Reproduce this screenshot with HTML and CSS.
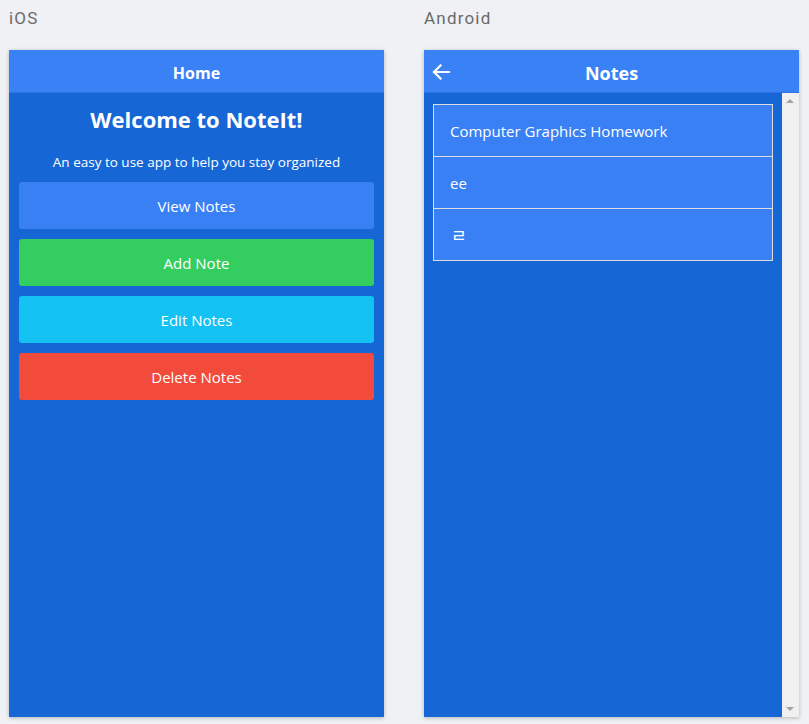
FILE: index.html
```html
<!DOCTYPE html>
<html>
<head>
<meta charset="utf-8">
<link rel="stylesheet" href="styles.css">
</head>
<body>
<div class="stage">
  <section class="col">
    <div class="label">iOS</div>
    <div class="phone">
      <div class="bar"><span class="bar-title">Home</span></div>
      <div class="home">
        <h1 class="welcome">Welcome to NoteIt!</h1>
        <p class="sub">An easy to use app to help you stay organized</p>
        <div class="btn btn-view">View Notes</div>
        <div class="btn btn-add">Add Note</div>
        <div class="btn btn-edit">Edit Notes</div>
        <div class="btn btn-del">Delete Notes</div>
      </div>
    </div>
  </section>
  <section class="col col-android">
    <div class="label">Android</div>
    <div class="phone">
      <div class="bar bar-android">
        <svg class="back" width="18" height="16" viewBox="0 0 18 16"><path d="M17 8H2M8.5 1.5L2 8l6.5 6.5" fill="none" stroke="#fff" stroke-width="2.2" stroke-linecap="square"/></svg>
        <span class="bar-title bar-title-lg">Notes</span>
      </div>
      <div class="notes-body">
        <div class="notes-scroll">
          <ul class="list">
            <li class="item">Computer Graphics Homework</li>
            <li class="item">ee</li>
            <li class="item item-kr">ㄹ</li>
          </ul>
        </div>
        <div class="scrollbar">
          <span class="arrow arrow-up"></span>
          <span class="arrow arrow-down"></span>
        </div>
      </div>
    </div>
  </section>
</div>
</body>
</html>
```
FILE: styles.css
```css
* { box-sizing: border-box; }
html, body { margin: 0; padding: 0; }
body {
  background: #f0f1f4;
  font-family: "Open Sans", "Noto Sans", sans-serif;
  width: 809px;
  height: 724px;
  overflow: hidden;
}
.stage {
  display: flex;
  gap: 40px;
  padding-left: 9px;
}
.col { width: 375px; display: flex; flex-direction: column; }
.col-android { width: 375px; }
.label {
  font-family: Roboto, "Liberation Sans", sans-serif;
  color: #6b6b6b;
  font-size: 17px;
  letter-spacing: 1.2px;
  height: 50px;
  padding-top: 8px;
  line-height: 20px;
}
.phone {
  height: 667px;
  background: #1766d6;
  box-shadow: 0 1px 4px rgba(0,0,0,0.25);
  display: flex;
  flex-direction: column;
}
.bar {
  height: 43px;
  flex: none;
  background: #3a81f5;
  border-bottom: 1px solid #2a72e6;
  display: flex;
  align-items: center;
  justify-content: center;
  position: relative;
  padding-top: 3px;
}
.bar-title {
  color: #fff;
  font-weight: 700;
  font-size: 16px;
}
.bar-title-lg { font-size: 18px; }
.back { position: absolute; left: 8px; top: 14px; }
.home {
  padding: 0 10px;
  display: flex;
  flex-direction: column;
}
.welcome {
  margin: 10px 0 0;
  text-align: center;
  color: #fff;
  font-size: 22px;
  font-weight: 700;
  line-height: 32px;
}
.sub {
  margin: 19px 0 0;
  text-align: center;
  color: #fff;
  font-size: 13.5px;
  line-height: 16px;
}
.btn {
  height: 47px;
  margin-top: 10px;
  border-radius: 3px;
  color: #fff;
  font-size: 15px;
  display: flex;
  align-items: center;
  justify-content: center;
}
.sub + .btn { margin-top: 12px; }
.btn-view { background: #3a80f5; }
.btn-add { background: #34cd60; }
.btn-edit { background: #13c2f3; }
.btn-del { background: #f24a3b; }
.notes-body {
  flex: 1;
  display: flex;
}
.notes-scroll {
  flex: 1;
  padding: 11px 9px 0;
}
.list {
  list-style: none;
  margin: 0;
  padding: 0;
  border: 1px solid #dcdcdc;
  border-bottom: none;
}
.item {
  height: 52px;
  background: #3a80f5;
  border-bottom: 1px solid #dcdcdc;
  color: #fff;
  font-size: 15px;
  display: flex;
  align-items: center;
  padding-left: 16px;
}
.item-kr {
  font-family: "Noto Sans CJK KR", "Open Sans", sans-serif;
  font-size: 17px;
  padding-left: 17px;
}
.scrollbar {
  width: 17px;
  background: #f0f0f0;
  position: relative;
}
.arrow {
  position: absolute;
  left: 4px;
  width: 0; height: 0;
  border-left: 4px solid transparent;
  border-right: 4px solid transparent;
}
.arrow-up { top: 6px; border-bottom: 4px solid #a3a3a3; }
.arrow-down { bottom: 6px; border-top: 4px solid #a3a3a3; }
```
